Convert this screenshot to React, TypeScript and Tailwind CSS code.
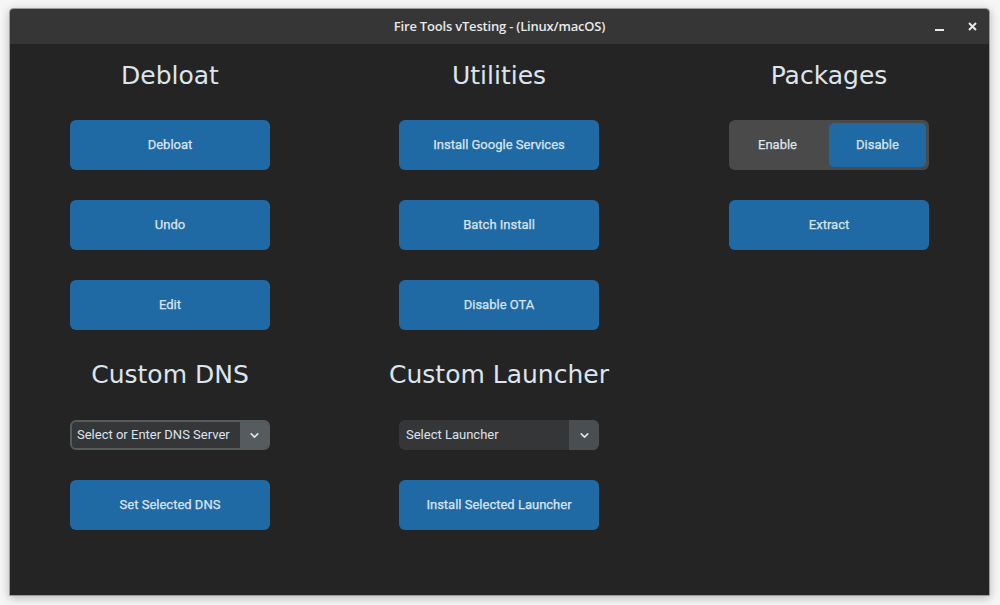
import { ChevronDown } from 'lucide-react'

const btn = "h-[50px] w-[200px] rounded-[6px] bg-[#1f6aa5] text-[13px] font-normal text-[#dce4ee] flex items-center justify-center [-webkit-text-stroke:0.25px_#dce4ee]"
const heading = "h-[40px] flex items-center justify-center text-[25px] text-[#dce4ee] font-['DejaVu_Sans',sans-serif] whitespace-nowrap"

function Btn({ label }: { label: string }) {
    return <div className={btn}>{label}</div>
}

function Column({ children, className = '' }: { children: React.ReactNode; className?: string }) {
    return <div className={"w-[200px] flex flex-col " + className}>{children}</div>
}

export default function App() {
    return (
        <div className="w-[1000px] h-[605px] bg-[#f6f6f6] pt-[8px] pl-[9px] overflow-hidden font-['Roboto',sans-serif]">
            <div className="w-[981px] h-[588px] flex flex-col rounded-t-[4px] overflow-hidden border border-[#9a9a9a] shadow-[0_2px_10px_rgba(0,0,0,0.25)]">
                {/* title bar */}
                <div className="relative h-[35px] bg-[#363636] flex items-center justify-center">
                    <span className="text-[13px] font-semibold text-[#e8e8e8] font-['Open_Sans',sans-serif] tracking-[-0.2px]">
                        Fire Tools vTesting - (Linux/macOS)
                    </span>
                    <div className="absolute right-[12px] top-0 h-full flex items-center gap-[24px]">
                        <div className="w-[9px] h-[2px] bg-[#e8e8e8] mt-[6px]" />
                        <svg width="9" height="9" viewBox="0 0 9 9" className="text-[#e8e8e8]">
                            <path d="M1 1 L8 8 M8 1 L1 8" stroke="currentColor" strokeWidth="2" />
                        </svg>
                    </div>
                </div>

                {/* content */}
                <div className="flex-1 bg-[#242424] pl-[60px] pt-[12px]">
                    <div className="flex gap-x-[129px]">
                        <Column>
                            <div className={heading}>Debloat</div>
                            <div className="mt-[24px] flex flex-col gap-[30px]">
                                <Btn label="Debloat" />
                                <Btn label="Undo" />
                                <Btn label="Edit" />
                            </div>
                            <div className={heading + " mt-[25px]"}>Custom DNS</div>
                            <div className="mt-[25px] h-[30px] w-[200px] rounded-[6px] border-2 border-[#565b5e] bg-[#343638] flex overflow-hidden">
                                <div className="flex-1 flex items-center pl-[5px] text-[13px] text-[#dce4ee]">Select or Enter DNS Server</div>
                                <div className="w-[28px] bg-[#565b5e] flex items-center justify-center">
                                    <ChevronDown size={13} strokeWidth={3} color="#dce4ee" />
                                </div>
                            </div>
                            <div className="mt-[30px]">
                                <Btn label="Set Selected DNS" />
                            </div>
                        </Column>

                        <Column>
                            <div className={heading}>Utilities</div>
                            <div className="mt-[24px] flex flex-col gap-[30px]">
                                <Btn label="Install Google Services" />
                                <Btn label="Batch Install" />
                                <Btn label="Disable OTA" />
                            </div>
                            <div className={heading + " mt-[25px]"}>Custom Launcher</div>
                            <div className="mt-[25px] h-[30px] w-[200px] rounded-[6px] bg-[#343638] flex overflow-hidden">
                                <div className="flex-1 flex items-center pl-[7px] text-[13px] text-[#dce4ee]">Select Launcher</div>
                                <div className="w-[30px] bg-[#4b4e51] flex items-center justify-center">
                                    <ChevronDown size={13} strokeWidth={3} color="#dce4ee" />
                                </div>
                            </div>
                            <div className="mt-[30px]">
                                <Btn label="Install Selected Launcher" />
                            </div>
                        </Column>

                        <Column className="ml-[1px]">
                            <div className={heading}>Packages</div>
                            <div className="mt-[24px] h-[50px] w-[200px] rounded-[6px] bg-[#4a4a4a] flex p-[3px]">
                                <div className="flex-1 flex items-center justify-center pr-[6px] text-[13px] text-[#dce4ee] [-webkit-text-stroke:0.25px_#dce4ee]">Enable</div>
                                <div className="w-[97px] rounded-[5px] bg-[#1f6aa5] flex items-center justify-center text-[13px] text-[#dce4ee] [-webkit-text-stroke:0.25px_#dce4ee]">Disable</div>
                            </div>
                            <div className="mt-[30px]">
                                <Btn label="Extract" />
                            </div>
                        </Column>
                    </div>
                </div>
            </div>
        </div>
    )
}
